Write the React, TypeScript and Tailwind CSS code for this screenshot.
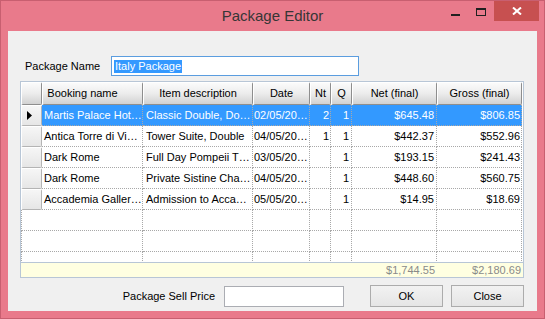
import React from "react";

type Row = {
  name: string;
  item: string;
  date: string;
  nt: string;
  q: string;
  net: string;
  gross: string;
};

const rows: Row[] = [
  { name: "Martis Palace Hot…", item: "Classic Double, Do…", date: "02/05/20…", nt: "2", q: "1", net: "$645.48", gross: "$806.85" },
  { name: "Antica Torre di Vi…", item: "Tower Suite, Double", date: "04/05/20…", nt: "1", q: "1", net: "$442.37", gross: "$552.96" },
  { name: "Dark Rome", item: "Full Day Pompeii T…", date: "03/05/20…", nt: "", q: "1", net: "$193.15", gross: "$241.43" },
  { name: "Dark Rome", item: "Private Sistine Cha…", date: "04/05/20…", nt: "", q: "1", net: "$448.60", gross: "$560.75" },
  { name: "Accademia Galler…", item: "Admission to Acca…", date: "05/05/20…", nt: "", q: "1", net: "$14.95", gross: "$18.69" },
];

const font = { fontFamily: '"Liberation Sans", Arial, sans-serif' };

// header cell, looks like a raised button
const HeadCell = ({ w, extra = "", children }: { w: string; extra?: string; children?: React.ReactNode }) => (
  <div
    className={`${w} ${extra} h-full shrink-0 flex items-center justify-center rounded-[2px] border border-t-white border-l-white border-r-[#8e8e8e] border-b-[#8e8e8e] bg-gradient-to-b from-[#fbfbfb] via-[#ececec] to-[#d2d2d2] text-black text-[11px] whitespace-nowrap overflow-hidden`}
  >
    {children}
  </div>
);

const dot = "border-r border-b border-dotted border-[#a8a8a8]";

function DataRow({ row, selected }: { row: Row; selected: boolean }) {
  const cell = `h-full shrink-0 flex items-center overflow-hidden whitespace-nowrap ${dot}`;
  return (
    <div className={`flex h-[21px] shrink-0 text-[11px] ${selected ? "text-white" : "text-black"}`}>
      <div className="w-[21px] h-full shrink-0 flex items-center pl-[5px] rounded-[2px] border border-t-white border-l-white border-r-[#b4b4b4] border-b-[#b4b4b4] bg-gradient-to-b from-[#f6f6f6] to-[#e6e6e6]">
        {selected && (
          <svg width="5" height="9" viewBox="0 0 5 9">
            <path d="M0 0 L5 4.5 L0 9 Z" fill="#000" />
          </svg>
        )}
      </div>
      <div className={`flex h-full ${selected ? "bg-[#3399ff]" : "bg-white"}`}>
        <div className={`w-[101px] pl-[2px] ${cell}`}>{row.name}</div>
        <div className={`w-[110px] pl-[3px] ${cell}`}>{row.item}</div>
        <div className={`w-[57px] pl-[1px] ${cell}`}>{row.date}</div>
        <div className={`w-[21px] justify-end pr-[1px] ${cell}`}>{row.nt}</div>
        <div className={`w-[21px] justify-end pr-[2px] ${cell}`}>{row.q}</div>
        <div className={`w-[85px] justify-end pr-[2px] ${cell}`}>{row.net}</div>
        <div className={`w-[85px] justify-end pr-[1px] ${cell}`}>{row.gross}</div>
      </div>
    </div>
  );
}

function EmptyRow() {
  return (
    <div className="flex h-[21px] shrink-0">
      <div className={`w-[122px] h-full shrink-0 border-l border-dotted border-[#a8a8a8] ${dot}`} />
      <div className={`w-[110px] h-full shrink-0 ${dot}`} />
      <div className={`w-[57px] h-full shrink-0 ${dot}`} />
      <div className={`w-[21px] h-full shrink-0 ${dot}`} />
      <div className={`w-[21px] h-full shrink-0 ${dot}`} />
      <div className={`w-[85px] h-full shrink-0 ${dot}`} />
      <div className={`w-[85px] h-full shrink-0 ${dot}`} />
    </div>
  );
}

const WinButton = ({ label }: { label: string }) => (
  <button className="w-[73px] h-[22px] border border-[#acacac] bg-gradient-to-b from-[#f2f2f2] to-[#e5e5e5] text-[11px] text-black">
    {label}
  </button>
);

export default function App() {
  return (
    <div
      className="w-[545px] h-[319px] bg-[#e97a8b] border border-[#c85f70] flex flex-col overflow-hidden"
      style={font}
    >
      {/* title bar */}
      <div className="relative h-[30px] shrink-0 flex items-center justify-center">
        <span className="text-[15px] text-[#363636] mt-[1px]">Package Editor</span>
        <div className="absolute right-[5px] top-0 flex items-start">
          <div className="w-[26px] h-[20px] flex items-center justify-center">
            <svg width="9" height="20" viewBox="0 0 9 20">
              <rect x="0" y="13" width="9" height="2" fill="#202020" />
            </svg>
          </div>
          <div className="w-[26px] h-[20px] flex items-center justify-center">
            <svg width="10" height="20" viewBox="0 0 10 20">
              <rect x="0.5" y="7.5" width="9" height="7" fill="none" stroke="#202020" />
              <rect x="0" y="7" width="10" height="2" fill="#202020" />
            </svg>
          </div>
          <div className="w-[45px] h-[20px] bg-[#c75050] flex items-center justify-center">
            <svg width="10" height="8" viewBox="0 0 10 8">
              <path d="M1 0.5 L9 7.5 M9 0.5 L1 7.5" stroke="#fff" strokeWidth="2" />
            </svg>
          </div>
        </div>
      </div>

      {/* client area */}
      <div className="mx-[7px] h-[280px] bg-[#f0f0f0] flex flex-col pl-[12px] pr-[13px]">
        <div className="flex items-center mt-[25px] h-[20px] pl-[5px]">
          <span className="w-[86px] text-[11px] text-black">Package Name</span>
          <div className="w-[248px] h-[20px] border border-[#5b9ddf] bg-white flex items-center pl-[2px]">
            <span className="bg-[#3399ff] text-white text-[11px] leading-[13px] px-[1px]">Italy Package</span>
          </div>
        </div>

        {/* grid */}
        <div className="mt-[5px] w-[504px] h-[182px] shrink-0 border border-[#b8c6d6] bg-white flex flex-col overflow-hidden">
          <div className="flex h-[23px] shrink-0">
            <HeadCell w="w-[21px]" />
            <HeadCell w="w-[101px]" extra="pr-[20px]">Booking name</HeadCell>
            <HeadCell w="w-[110px]">Item description</HeadCell>
            <HeadCell w="w-[57px]">Date</HeadCell>
            <HeadCell w="w-[21px]">Nt</HeadCell>
            <HeadCell w="w-[21px]">Q</HeadCell>
            <HeadCell w="w-[85px]">Net (final)</HeadCell>
            <HeadCell w="w-[85px]">Gross (final)</HeadCell>
          </div>
          {rows.map((r, i) => (
            <DataRow key={i} row={r} selected={i === 0} />
          ))}
          <EmptyRow />
          <EmptyRow />
          <EmptyRow />
        </div>
        <div className="w-[504px] h-[15px] shrink-0 border-x border-b border-[#b8c6d6] bg-[#ffffe1] flex text-[11px] text-[#8a8a8a]">
          <div className="w-[331px] shrink-0" />
          <div className="w-[85px] shrink-0 text-right pr-[2px] leading-[14px]">$1,744.55</div>
          <div className="w-[85px] shrink-0 text-right pr-[1px] leading-[14px]">$2,180.69</div>
        </div>

        {/* bottom bar */}
        <div className="mt-[7px] flex items-center justify-end">
          <span className="text-[11px] text-black mr-[9px]">Package Sell Price</span>
          <div className="w-[120px] h-[21px] border border-[#abadb3] bg-white mr-[26px]" />
          <WinButton label="OK" />
          <div className="w-[8px]" />
          <WinButton label="Close" />
        </div>
      </div>
    </div>
  );
}
